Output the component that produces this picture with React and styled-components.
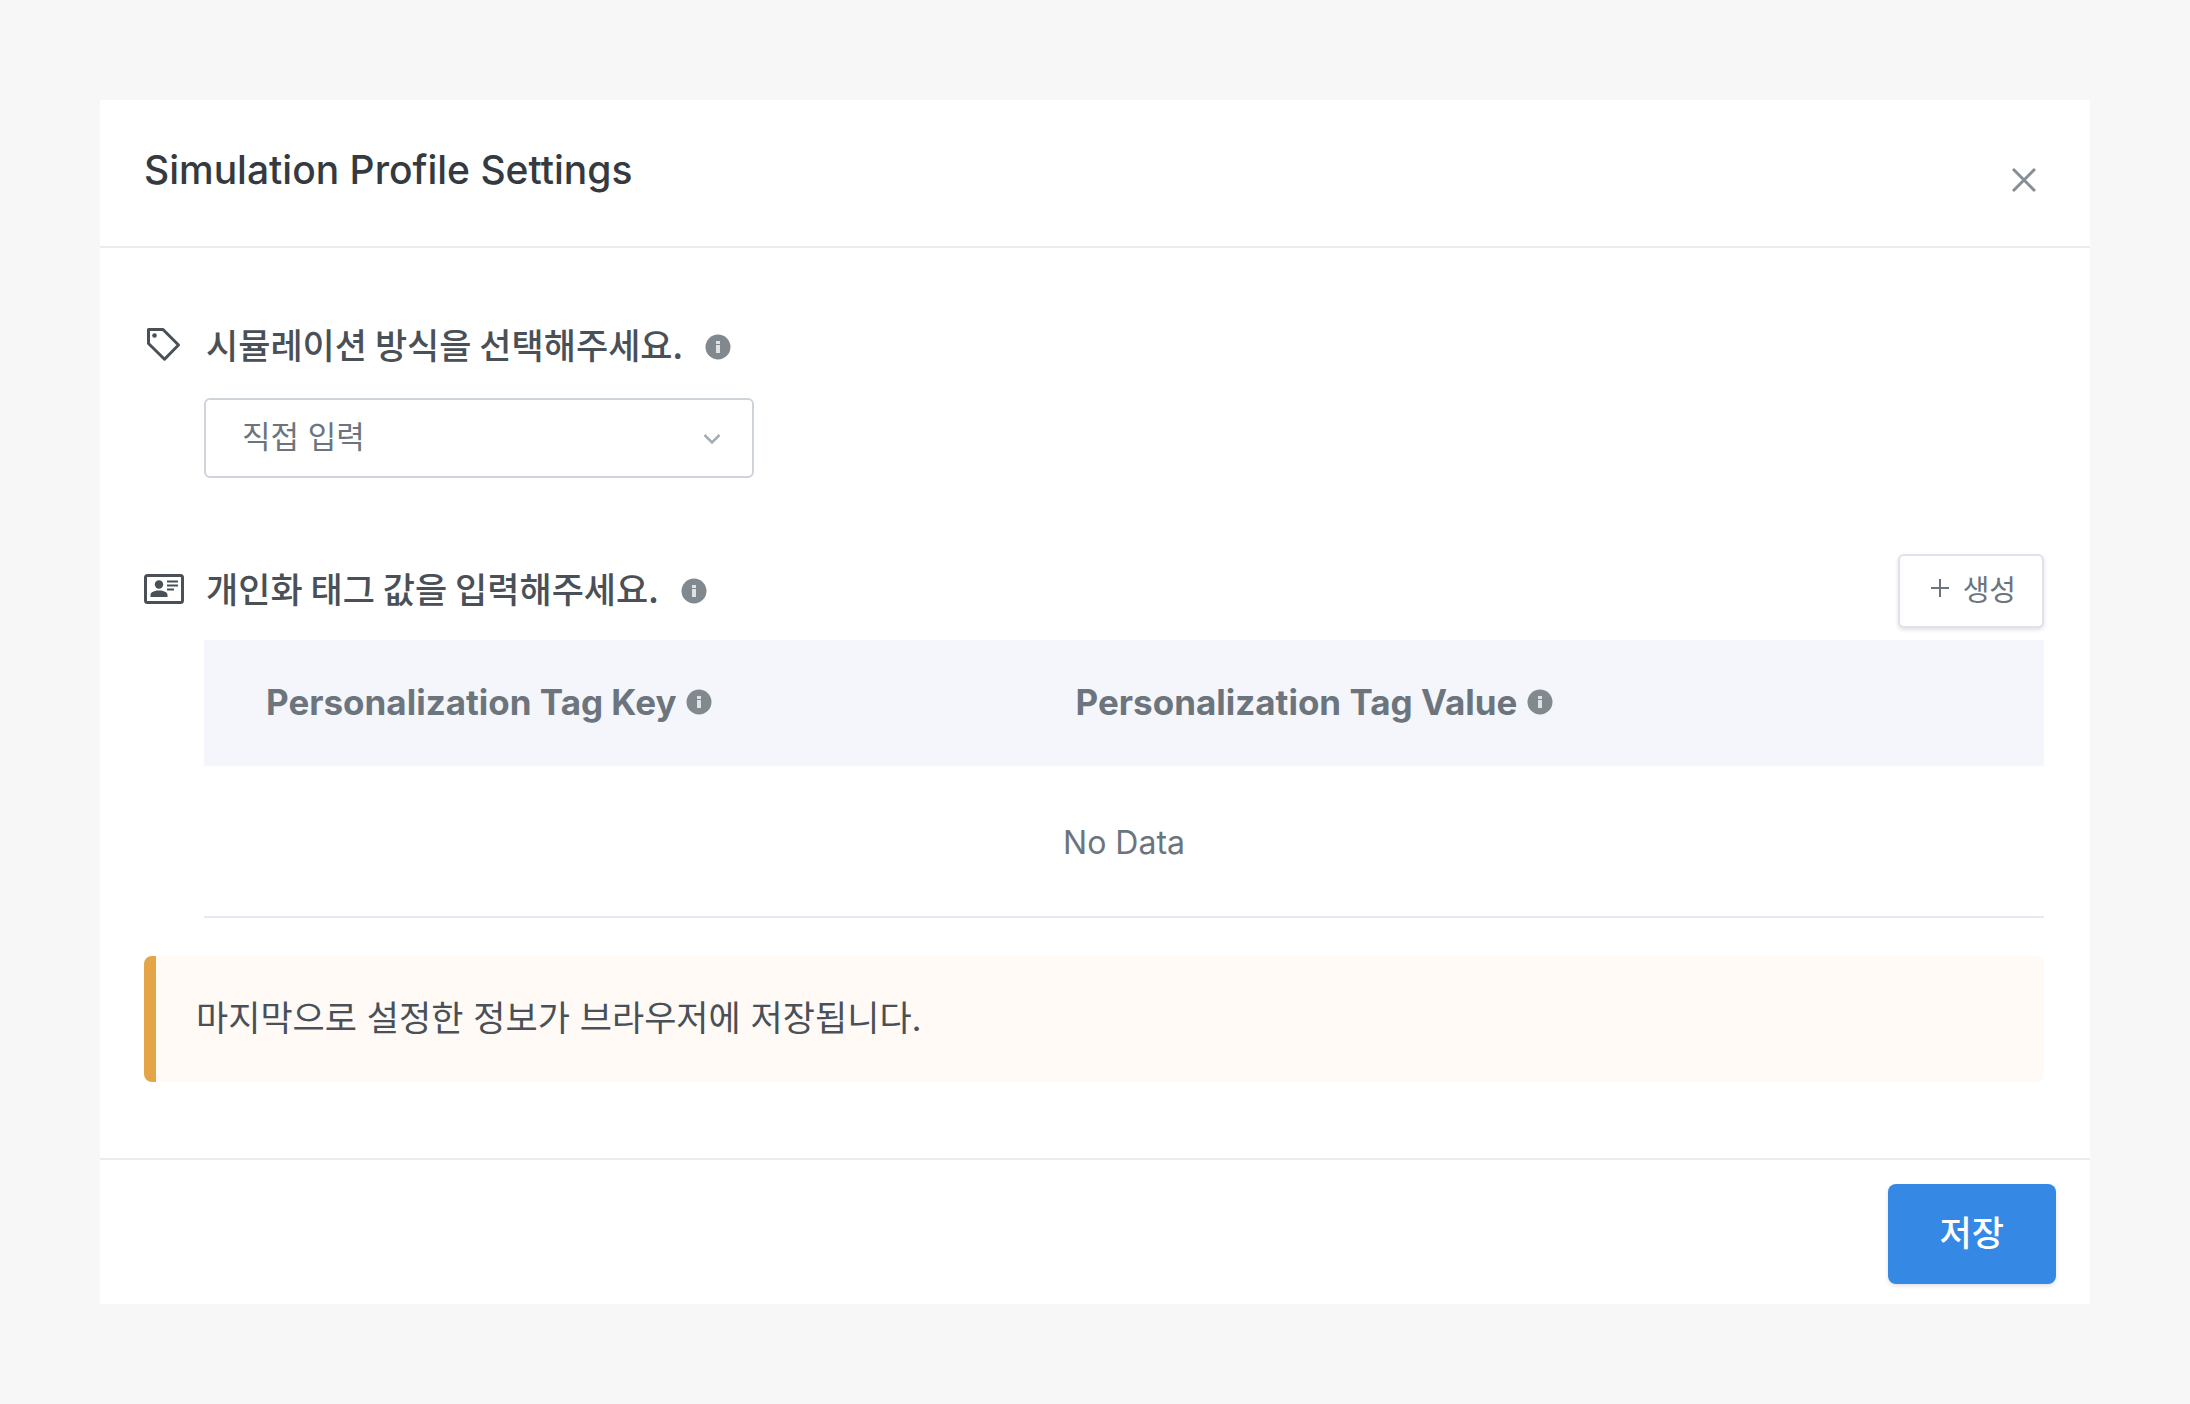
import React, { useState } from "react";
import styled, { createGlobalStyle } from "styled-components";

const GlobalStyle = createGlobalStyle`
  * {
    box-sizing: border-box;
  }

  body {
    margin: 0;
    background: #f7f7f7;
    color: #495057;
    font-family: Inter, "Noto Sans CJK KR", sans-serif;
  }

  button, select {
    font-family: inherit;
  }
`;

const Page = styled.main`
  min-height: 100vh;
  padding: 100px;
`;

const Modal = styled.section`
  background: #fff;
`;

const Header = styled.header`
  display: flex;
  justify-content: space-between;
  align-items: flex-start;
  padding: 44px 46px 46px 44px;
  border-bottom: 2px solid #e9eeed;
`;

const Title = styled.h1`
  margin: 0;
  font-size: 39px;
  font-weight: 500;
  line-height: 52px;
  color: #343a40;
`;

const CloseButton = styled.button`
  display: flex;
  margin-top: 16px;
  padding: 8px;
  border: 0;
  background: none;
  color: #868e96;
  cursor: pointer;
`;

const Body = styled.div`
  padding: 74px 46px 76px 44px;
`;

const Section = styled.section`
  margin-bottom: ${props => props.$gap}px;
`;

const SectionHead = styled.div`
  display: flex;
  align-items: center;
  min-height: ${props => props.$height}px;
  margin-bottom: ${props => props.$gap}px;
`;

const IconSlot = styled.span`
  display: flex;
  flex: none;
  width: 62px;
  padding-bottom: 4px;
`;

const SectionTitle = styled.h2`
  margin: 0 22px 0 0;
  padding-bottom: 6px;
  font-family: "Noto Sans CJK KR", sans-serif;
  font-size: 35px;
  font-weight: 500;
  line-height: 44px;
`;

const Content = styled.div`
  margin-left: 60px;
`;

const SelectBox = styled.div`
  position: relative;
  max-width: 550px;
`;

const Select = styled.select`
  display: block;
  width: 100%;
  height: 80px;
  padding: 0 80px 4px 36px;
  border: 2px solid #ced4da;
  border-radius: 6px;
  appearance: none;
  background: #fff;
  color: #6c757d;
  font-size: 31px;
`;

const Chevron = styled.svg`
  position: absolute;
  right: 32px;
  top: 33px;
  pointer-events: none;
`;

const CreateButton = styled.button`
  display: flex;
  align-items: center;
  gap: 14px;
  height: 74px;
  margin-left: auto;
  padding: 0 26px 6px 31px;
  border: 2px solid #dee2ec;
  border-radius: 6px;
  background: #fff;
  box-shadow: 0 2px 4px rgba(0, 0, 0, 0.12);
  color: #6c757d;
  font-size: 29px;
  cursor: pointer;
`;

const Table = styled.table`
  width: 100%;
  table-layout: fixed;
  border-collapse: separate;
  border-spacing: 0;
  color: #6c757d;
`;

const HeadCell = styled.th`
  width: ${props => props.$width};
  height: 126px;
  padding: 0 0 2px 62px;
  background: #f5f6fb;
  font-size: 35px;
  font-weight: 700;
  text-align: left;
`;

const HeadLabel = styled.span`
  display: flex;
  align-items: center;
  gap: 10px;
`;

const EmptyCell = styled.td`
  height: 152px;
  padding: 2px 0 0;
  border-bottom: 2px solid #e5e9f4;
  font-size: 32px;
  text-align: center;
`;

const Notice = styled.p`
  margin: 0;
  padding: 37px 40px 39px;
  border-left: 12px solid #e4a548;
  border-radius: 8px;
  background: #fffaf6;
  font-size: 35px;
  line-height: 50px;
`;

const Footer = styled.footer`
  display: flex;
  justify-content: flex-end;
  padding: 24px 34px 20px;
  border-top: 2px solid #e9eeed;
`;

const SaveButton = styled.button`
  height: 100px;
  padding: 0 52px 8px;
  border: 0;
  border-radius: 8px;
  background: #3688e5;
  box-shadow: 0 2px 4px rgba(0, 0, 0, 0.12);
  color: #fff;
  font-size: 35px;
  font-weight: 500;
  cursor: pointer;
`;

const InfoMark = styled.svg`
  display: block;
  flex: none;
`;

function InfoIcon() {
  return (
    <InfoMark width="26" height="26" viewBox="0 0 26 26" role="img" aria-label="info">
      <circle cx="13" cy="13" r="12.5" fill="#82898e" />
      <path d="M11 7h4v3h-4zM11 11h4v8h-4z" fill="#dfe2e4" />
    </InfoMark>
  );
}

function TagIcon() {
  return (
    <svg width="38" height="38" viewBox="0 0 38 38" fill="none" aria-hidden="true">
      <path
        d="M4.5 3.5H19L34.5 19 20.5 33.2 4.5 17.5z"
        stroke="#495057"
        strokeWidth="3"
        strokeLinejoin="round"
      />
      <circle cx="10.5" cy="9.5" r="2.3" fill="#495057" />
    </svg>
  );
}

function CardIcon() {
  return (
    <svg width="40" height="30" viewBox="0 0 40 30" fill="none" aria-hidden="true">
      <rect x="1.5" y="1.5" width="37" height="27" rx="2" stroke="#495057" strokeWidth="3" />
      <circle cx="15" cy="10.5" r="4.2" fill="#495057" />
      <path d="M6.5 23v-2c0-3 4-4.5 8.5-4.5s8.5 1.5 8.5 4.5v2z" fill="#495057" />
      <path d="M23 7.5h11M23 11.5h11M23 15.5h7" stroke="#495057" strokeWidth="1.8" />
    </svg>
  );
}

function App() {
  const [mode, setMode] = useState("manual");

  return (
    <>
      <GlobalStyle />
      <Page>
        <Modal aria-labelledby="modal-title">
          <Header>
            <Title id="modal-title">Simulation Profile Settings</Title>
            <CloseButton type="button" aria-label="Close">
              <svg width="24" height="24" viewBox="0 0 24 24" fill="none">
                <path d="M1 1l22 22M23 1L1 23" stroke="currentColor" strokeWidth="3" />
              </svg>
            </CloseButton>
          </Header>

          <Body>
            <Section $gap={76}>
              <SectionHead $height={50} $gap={26}>
                <IconSlot><TagIcon /></IconSlot>
                <SectionTitle>
                  <label htmlFor="mode">시뮬레이션 방식을 선택해주세요.</label>
                </SectionTitle>
                <InfoIcon />
              </SectionHead>
              <Content>
                <SelectBox>
                  <Select id="mode" value={mode} onChange={e => setMode(e.target.value)}>
                    <option value="manual">직접 입력</option>
                  </Select>
                  <Chevron width="20" height="16" viewBox="0 0 20 16" fill="none" aria-hidden="true">
                    <path d="M2.5 4L10 11.5 17.5 4" stroke="#a5adb4" strokeWidth="2.5" />
                  </Chevron>
                </SelectBox>
              </Content>
            </Section>

            <Section $gap={38}>
              <SectionHead $height={74} $gap={12}>
                <IconSlot><CardIcon /></IconSlot>
                <SectionTitle>개인화 태그 값을 입력해주세요.</SectionTitle>
                <InfoIcon />
                <CreateButton type="button">
                  <svg width="18" height="18" viewBox="0 0 18 18" aria-hidden="true">
                    <path d="M9 0v18M0 9h18" stroke="currentColor" strokeWidth="2" />
                  </svg>
                  생성
                </CreateButton>
              </SectionHead>
              <Content>
                <Table>
                  <thead>
                    <tr>
                      <HeadCell $width="44%">
                        <HeadLabel>Personalization Tag Key <InfoIcon /></HeadLabel>
                      </HeadCell>
                      <HeadCell $width="56%">
                        <HeadLabel>Personalization Tag Value <InfoIcon /></HeadLabel>
                      </HeadCell>
                    </tr>
                  </thead>
                  <tbody>
                    <tr>
                      <EmptyCell colSpan={2}>No Data</EmptyCell>
                    </tr>
                  </tbody>
                </Table>
              </Content>
            </Section>

            <Notice>마지막으로 설정한 정보가 브라우저에 저장됩니다.</Notice>
          </Body>

          <Footer>
            <SaveButton type="button">저장</SaveButton>
          </Footer>
        </Modal>
      </Page>
    </>
  );
}

export default App;
